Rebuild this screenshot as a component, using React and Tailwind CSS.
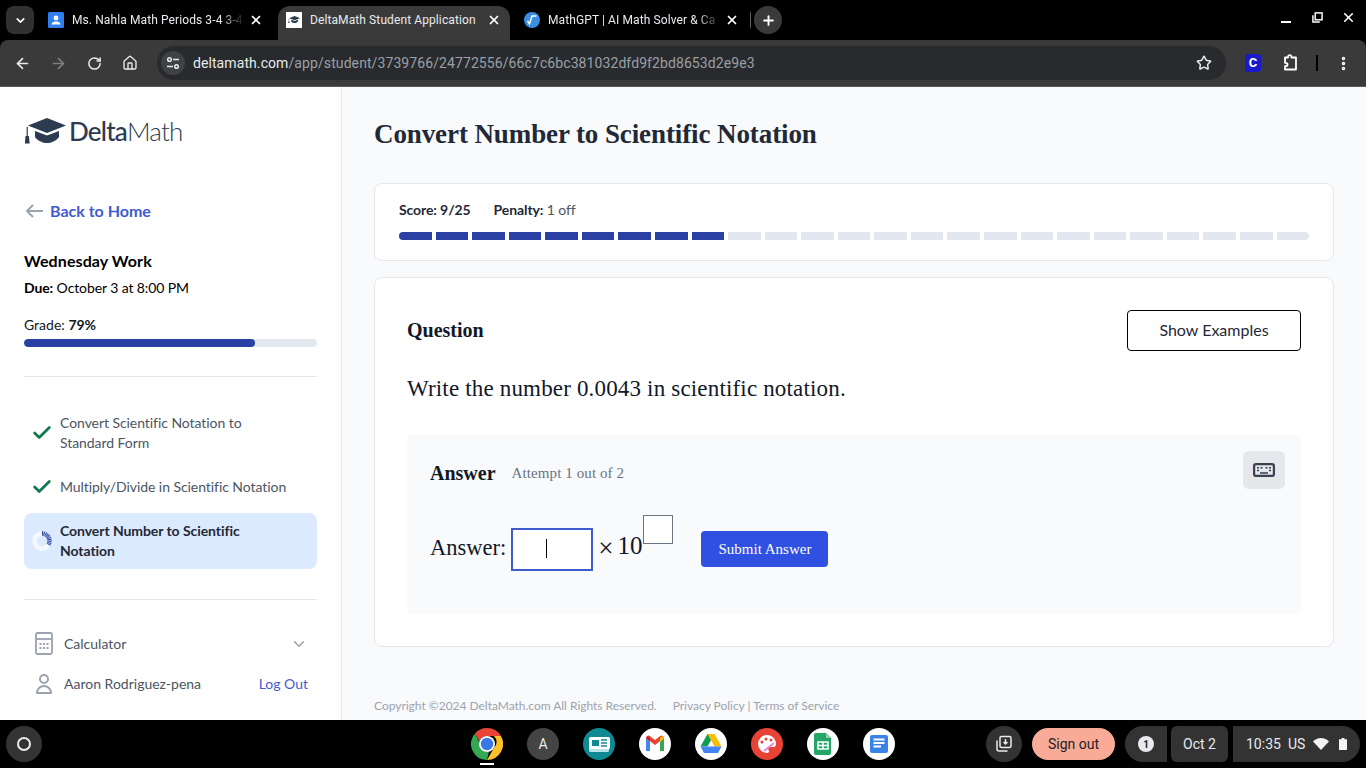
import { ArrowLeft, ArrowRight, Check, ChevronDown, Home, MoreVertical, Plus, RotateCw, Star, X } from "lucide-react";
import { HiOutlineUser } from "react-icons/hi";

const lato = "font-['Lato','Liberation_Sans',sans-serif]";
const serif = "font-['Liberation_Serif','Times_New_Roman',serif]";
const roboto = "font-['Roboto','Liberation_Sans',sans-serif]";

const CapIcon = ({ className, color = "#2d3b50" }) => (
  <svg viewBox="0 0 42 26" className={className} fill={color}>
    <path d="M23 0 42 7.500 23 15 4 7.500Z" />
    <path d="M11 13 23 17.500 35 13v6c-3 4-8 6-12 6s-9-2-12-6Z" />
    <path d="M2.600 9h1.200v9H2.600Z" />
    <path d="M1.500 18h3.400l.8 7.500H.9Z" />
  </svg>
);

const ChromeTab = ({ icon, title, active, faded }) => (
  <div className={`flex h-[34px] shrink-0 items-center pb-[7px] pl-2 ${active ? "mr-[6px] w-[232px] rounded-t-xl bg-[#3a3a3a] pr-[9px]" : "w-[238px] pr-[15px]"}`}>
    <span className="flex h-4 w-4 shrink-0 items-center justify-center">{icon}</span>
    <span className={`ml-2 min-w-0 flex-1 overflow-hidden whitespace-nowrap text-xs tracking-[0.1px] text-[#e8eaed] ${roboto} ${faded ? "[mask-image:linear-gradient(to_right,black_86%,transparent_100%)]" : ""}`}>
      {title}
    </span>
    <X size={14} strokeWidth={3} className="ml-1 shrink-0 text-white" />
  </div>
);

const TopBar = () => (
  <div className="shrink-0 bg-black">
    <div className="flex h-10 items-end">
      <div className="mb-[6px] ml-[6px] flex h-7 w-7 items-center justify-center rounded-lg bg-[#303030]">
        <ChevronDown size={13} strokeWidth={3} className="text-white" />
      </div>
      <div className="ml-[6px] flex">
        <ChromeTab
          title="Ms. Nahla Math Periods 3-4 3-4"
          faded
          icon={
            <svg viewBox="0 0 16 16" className="h-4 w-4">
              <rect width="16" height="16" rx="1.500" fill="#2f7ff0" />
              <circle cx="8" cy="6" r="2.400" fill="#fff" />
              <path d="M3.500 12.500c.5-2.500 2.500-3 4.500-3s4 .5 4.500 3Z" fill="#fff" />
            </svg>
          }
        />
        <ChromeTab
          active
          title="DeltaMath Student Application"
          icon={
            <span className="flex h-4 w-4 items-center justify-center bg-white">
              <CapIcon className="w-3" />
            </span>
          }
        />
        <ChromeTab
          title="MathGPT | AI Math Solver & Ca"
          faded
          icon={
            <svg viewBox="0 0 16 16" className="h-4 w-4">
              <circle cx="8" cy="8" r="8" fill="#3b8fe0" />
              <path d="M3.500 9 5.500 12 8 4h4.500" fill="none" stroke="#fff" strokeWidth="1.400" />
            </svg>
          }
        />
      </div>
      <div className="mb-[12px] ml-[-4px] h-4 w-px bg-[#5f6368]" />
      <div className="mb-[6px] ml-[3px] flex h-7 w-7 items-center justify-center rounded-full bg-[#3a3a3a]">
        <Plus size={15} strokeWidth={3} className="text-white" />
      </div>
      <div className="mb-[15px] ml-auto flex items-center text-white">
        <div className="mt-[8px] h-[2px] w-[10px] bg-white" />
        <svg viewBox="0 0 12 12" className="ml-[21px] h-[11px] w-[11px]" fill="none" stroke="#fff" strokeWidth="1.600">
          <rect x="3.500" y="1" width="7.500" height="7.500" />
          <path d="M1 3.500V11h7.500" />
        </svg>
        <X size={15} strokeWidth={2.600} className="ml-[18px] mr-[10px]" />
      </div>
    </div>
    <div className="flex h-[47px] items-center rounded-t-lg border-b border-[#5a5a5a] bg-[#3a3a3a] pr-[14px]">
      <ArrowLeft size={17} strokeWidth={2.400} className="ml-[14px] text-[#e8eaed]" />
      <ArrowRight size={17} strokeWidth={2.400} className="ml-[19px] text-[#7c7f83]" />
      <RotateCw size={15} strokeWidth={2.400} className="ml-[20px] text-[#e8eaed]" />
      <Home size={16} strokeWidth={2} className="ml-[20px] text-[#e8eaed]" />
      <div className="ml-[19px] flex h-[34px] w-[1070px] items-center rounded-full bg-[#282a2d] pl-[4px] pr-[14px]">
        <span className="flex h-6 w-6 items-center justify-center rounded-full bg-[#3f4144]">
          <svg viewBox="0 0 14 14" className="h-[14px] w-[14px]" fill="none" stroke="#e8eaed" strokeWidth="1.500">
            <circle cx="3.500" cy="3.500" r="1.800" />
            <path d="M7 3.500h6M1 10.500h6" />
            <circle cx="10.500" cy="10.500" r="1.800" />
          </svg>
        </span>
        <span className={`ml-2 text-sm tracking-[0.09px] text-[#e8eaed] ${roboto}`}>
          deltamath.com<span className="text-[#9aa0a6]">/app/student/3739766/24772556/66c7c6bc381032dfd9f2bd8653d2e9e3</span>
        </span>
        <Star size={16} strokeWidth={2.200} className="ml-auto text-[#e8eaed]" />
      </div>
      <span className={`ml-[19px] flex h-[18px] w-4 items-center justify-center rounded-[3px] bg-[#1a1ac8] text-[13px] font-bold text-white ${roboto}`}>C</span>
      <svg viewBox="0 0 18 18" className="ml-[20px] h-[18px] w-[18px]" fill="none" stroke="#fff" strokeWidth="1.800" strokeLinejoin="round">
        <path d="M4 3.500h3V2.800a1.700 1.700 0 0 1 3.400 0v.7H15v12H4v-3.300h.8a1.700 1.700 0 0 0 0-3.400H4Z" />
      </svg>
      <div className="ml-[17px] h-4 w-[2px] bg-black" />
      <MoreVertical size={17} strokeWidth={3} className="ml-[17px] text-white" />
    </div>
  </div>
);

const Spinner = () => (
  <svg viewBox="0 0 20 20" className="h-5 w-5 shrink-0">
    <circle cx="10" cy="10" r="7.500" fill="none" stroke="#fff" strokeWidth="4.500" strokeDasharray="1.100 0.500" />
    <path d="M10 2.500A7.500 7.500 0 0 1 16.500 13.700" fill="none" stroke="#2b40a3" strokeWidth="4.500" strokeDasharray="1.100 0.500" />
  </svg>
);

const SkillRow = ({ lines, done, active }) => (
  <div className={`flex items-center rounded-lg py-2 pl-2 pr-4 ${active ? "bg-[#dbeafe]" : ""}`}>
    <span className="flex h-5 w-5 shrink-0 items-center justify-center">
      {done ? <Check size={22} strokeWidth={3} className="shrink-0 text-[#0f7a4d]" /> : <Spinner />}
    </span>
    <span className={`ml-2 text-sm leading-5 tracking-[-0.06px] ${active ? "font-bold text-[#1f2937]" : "text-[#4b5563]"}`}>
      {lines.map((line) => (
        <span key={line} className="block">
          {line}
        </span>
      ))}
    </span>
  </div>
);

const Sidebar = () => (
  <aside className={`flex w-[342px] shrink-0 flex-col border-r border-[#e5e7eb] bg-white px-6 pt-[30px] ${lato}`}>
    <div className="flex h-7 items-center">
      <CapIcon className="w-[42px]" />
      <span className="ml-[3px] text-[26px] leading-7 tracking-[-0.8px] text-[#2d3b50]">
        <span className="font-medium">Delta</span>
        <span className="font-light">Math</span>
      </span>
    </div>
    <div className="mt-[54px] flex h-6 items-center">
      <svg viewBox="0 0 18 14" className="ml-px h-[14px] w-[18px]" fill="none" stroke="#9ca3af" strokeWidth="2">
        <path d="M18 7H2M8 1 2 7l6 6" />
      </svg>
      <span className="ml-[7px] text-base font-bold text-[#3f5bd0]">Back to Home</span>
    </div>
    <div className="mt-[26px] text-base font-bold leading-6 tracking-[0.1px] text-black">Wednesday Work</div>
    <div className="mt-[3px] text-sm leading-6 tracking-[-0.1px] text-black">
      <span className="font-bold">Due:</span> October 3 at 8:00 PM
    </div>
    <div className="mt-[15px] text-sm leading-5 text-[#111827]">
      Grade: <span className="font-bold">79%</span>
    </div>
    <div className="mt-1 h-2 overflow-hidden rounded-full bg-[#e3e7ef]">
      <div className="h-2 rounded-full bg-[#2b40a3]" style={{ width: "79%" }} />
    </div>
    <div className="mt-[29px] h-px bg-[#e5e7eb]" />
    <div className="mt-7 flex flex-col gap-2">
      <SkillRow done lines={["Convert Scientific Notation to", "Standard Form"]} />
      <SkillRow done lines={["Multiply/Divide in Scientific Notation"]} />
      <SkillRow active lines={["Convert Number to Scientific", "Notation"]} />
    </div>
    <div className="mt-[30px] h-px bg-[#e5e7eb]" />
    <div className="mt-[24px] flex h-10 items-center pl-[11px] text-sm text-[#4b5563]">
      <svg viewBox="0 0 18 24" className="h-6 w-[18px]" fill="none" stroke="#9ca3af" strokeWidth="1.800">
        <rect x="1" y="1" width="16" height="21" rx="1.500" />
        <path d="M1 7h16" />
        <path d="M4.500 11h2v2h-2ZM8 11h2v2H8ZM11.500 11h2v2h-2ZM4.500 15h2v2h-2ZM8 15h2v2H8ZM11.500 15h2v2h-2Z" fill="#9ca3af" stroke="none" />
      </svg>
      <span className="ml-[11px]">Calculator</span>
      <ChevronDown size={18} strokeWidth={2} className="ml-auto mr-[9px] text-[#9ca3af]" />
    </div>
    <div className="flex h-10 items-center pl-2 text-sm text-[#4b5563]">
      <HiOutlineUser size={24} className="text-[#9ca3af]" />
      <span className="ml-2">Aaron Rodriguez-pena</span>
      <span className="ml-auto mr-[9px] text-[#3f5bd0]">Log Out</span>
    </div>
  </aside>
);

const ScoreCard = () => (
  <div className={`mt-[31px] h-[78px] rounded-lg border border-[#e5e7eb] bg-white px-6 pt-4 ${lato}`}>
    <div className="flex text-sm leading-5 tracking-[-0.1px]">
      <span className="font-bold text-[#1f2937]">Score: 9/25</span>
      <span className="ml-[23px] text-[#4b5563]">
        <span className="font-bold text-[#1f2937]">Penalty:</span> 1 off
      </span>
    </div>
    <div className="mt-3 flex gap-1">
      {Array.from({ length: 25 }, (_, i) => (
        <div
          key={i}
          className={`h-2 flex-1 ${i < 9 ? "bg-[#2b40a3]" : "bg-[#e3e7ef]"} ${i === 0 ? "rounded-l-full" : ""} ${i === 24 ? "rounded-r-full" : ""}`}
        />
      ))}
    </div>
  </div>
);

const QuestionCard = () => (
  <div className="mt-4 h-[370px] rounded-lg border border-[#e5e7eb] bg-white px-8 pt-8">
    <div className="flex items-center justify-between">
      <h2 className={`pb-[2px] text-[20px] font-bold text-[#111827] ${serif}`}>Question</h2>
      <button type="button" className={`h-[41px] w-[174px] rounded border border-black pb-[2px] text-base text-[#1f2937] ${lato}`}>
        Show Examples
      </button>
    </div>
    <p className={`mt-[22px] text-[23px] leading-[32px] tracking-[0.17px] text-[#111827] ${serif}`}>Write the number 0.0043 in scientific notation.</p>
    <div className="mt-[30px] h-[179px] rounded bg-[#f9fafb] pl-[23px] pr-4 pt-4">
      <div className="flex items-start">
        <div className={`mt-[10px] flex items-center ${serif}`}>
          <span className="text-[20px] font-bold leading-6 text-[#111827]">Answer</span>
          <span className="ml-4 text-[15px] leading-6 tracking-[0.1px] text-[#6b7280]">Attempt 1 out of 2</span>
        </div>
        <button type="button" className="ml-auto flex h-[38px] w-[42px] items-center justify-center rounded-md bg-[#e5e7eb]">
          <svg viewBox="0 0 22 14" className="h-[14px] w-[22px]" fill="none" stroke="#374151" strokeWidth="2.200">
            <rect x="1.100" y="1.100" width="19.800" height="11.800" rx="2" />
            <path d="M4 4.800h2M7.500 4.800h2M12.500 4.800h2M16 4.800h2M4 7.500h2M16 7.500h2M7 10h8" strokeWidth="1.600" />
          </svg>
        </button>
      </div>
      <div className={`mt-[26px] flex h-[56px] items-end ${serif}`}>
        <span className="mb-[9px] text-[22.5px] leading-7 text-[#111827]">Answer:</span>
        <div className="relative ml-[5px] h-[43px] w-[82px] border-2 border-[#3f5bd0] bg-white">
          <span className="absolute left-[33px] top-[9px] h-[19px] w-px bg-black" />
        </div>
        <span className="mb-[9px] ml-[5px] text-[27px] leading-7 text-[#111827]">×</span>
        <span className="mb-[11px] ml-[4px] text-[25px] leading-7 text-[#111827]">10</span>
        <div className="mb-[27px] ml-px h-[29px] w-[30px] border border-[#6b7280] bg-white" />
        <button type="button" className="mb-[4px] ml-[28px] h-9 w-[127px] rounded bg-[#2f50e0] text-[15px] text-white">
          Submit Answer
        </button>
      </div>
    </div>
  </div>
);

const Taskbar = () => (
  <div className={`relative flex h-12 shrink-0 items-center bg-black ${roboto}`}>
    <div className="ml-[6px] flex h-9 w-9 items-center justify-center rounded-full bg-[#333]">
      <div className="h-[14px] w-[14px] rounded-full border-2 border-[#e8eaed]" />
    </div>
    <div className="ml-[429px] flex items-center gap-6">
      <div className="relative h-8 w-8">
        <svg viewBox="0 0 32 32" className="h-8 w-8">
          <path d="M16 0a16 16 0 0 1 13.900 8H16a8 8 0 0 0-7.600 5.500L4 5.500A16 16 0 0 1 16 0Z" fill="#ea4335" />
          <path d="M29.900 8A16 16 0 0 1 16 32l6.900-12A8 8 0 0 0 22.900 8Z" fill="#fbc02d" />
          <path d="M16 32A16 16 0 0 1 4 5.500L9 16a7 7 0 0 0 9 7.500Z" fill="#34a853" />
          <circle cx="16" cy="16" r="8" fill="#fff" />
          <circle cx="16" cy="16" r="6.200" fill="#3b78e7" />
        </svg>
        <div className="absolute -bottom-[5px] left-[9px] h-[2px] w-[14px] bg-white" />
      </div>
      <div className="flex h-8 w-8 items-center justify-center rounded-full bg-[#444] text-sm text-[#e8eaed]">A</div>
      <svg viewBox="0 0 32 32" className="h-8 w-8">
        <circle cx="16" cy="16" r="16" fill="#0f8a94" />
        <rect x="6" y="12" width="20" height="12" rx="1.500" fill="#b8e3ea" />
        <rect x="6" y="9" width="21" height="12" rx="1.500" fill="#fff" />
        <rect x="9" y="12" width="7" height="6" fill="#0f8a94" />
        <path d="M18 12h6M18 15h6M18 18h6" stroke="#0f8a94" strokeWidth="1.400" />
      </svg>
      <svg viewBox="0 0 32 32" className="h-8 w-8">
        <circle cx="16" cy="16" r="16" fill="#fff" />
        <path d="M7 10v13h4v-9Z" fill="#4285f4" />
        <path d="M21 14v9h4V10Z" fill="#34a853" />
        <path d="M7 10a2.400 2.400 0 0 1 3.800-1.900L16 12l5.200-3.900A2.400 2.400 0 0 1 25 10l-9 7Z" fill="#ea4335" />
        <path d="M7 10l4 4v-4l-2-2Z" fill="#c5221f" />
        <path d="M25 10l-4 4v-4l2-2Z" fill="#fbbc04" />
      </svg>
      <svg viewBox="0 0 32 32" className="h-8 w-8">
        <circle cx="16" cy="16" r="16" fill="#fff" />
        <path d="M12.500 6h7l-7 12.500H5.500Z" fill="#0f9d58" />
        <path d="M19.500 6l7 12.500h-7L12.500 6Z" fill="#fbbc04" />
        <path d="M9 18.500h17.500L23 25H9l-3.500-6.500Z" fill="#4285f4" />
      </svg>
      <svg viewBox="0 0 32 32" className="h-8 w-8">
        <circle cx="16" cy="16" r="16" fill="#ea4335" />
        <path d="M16 7a9 9 0 1 0 0 18c2 0 2.500-1.500 1.500-3-1-2 0-3 2-3h3c1.500 0 2.500-1 2.500-3 0-5-4-9-9-9Z" fill="#fff" />
        <circle cx="11" cy="14" r="1.500" fill="#ea4335" />
        <circle cx="15" cy="11" r="1.500" fill="#ea4335" />
        <circle cx="20" cy="12" r="1.500" fill="#ea4335" />
        <path d="M13 23l10-8" stroke="#e38ad5" strokeWidth="2" />
      </svg>
      <svg viewBox="0 0 32 32" className="h-8 w-8">
        <circle cx="16" cy="16" r="16" fill="#fff" />
        <path d="M9 5h10l5 5v15a2 2 0 0 1-2 2H9a2 2 0 0 1-2-2V7a2 2 0 0 1 2-2Z" fill="#23a566" />
        <path d="M19 5l5 5h-5Z" fill="#8ed1b1" />
        <path d="M11 14h10v7H11ZM16 14v7M11 17.500h10" fill="none" stroke="#fff" strokeWidth="1.500" />
      </svg>
      <svg viewBox="0 0 32 32" className="h-8 w-8">
        <circle cx="16" cy="16" r="16" fill="#fff" />
        <rect x="7" y="7" width="18" height="18" rx="2" fill="#3b82e8" />
        <path d="M10.500 11.500h11M10.500 15h11M10.500 18.500h7.500" stroke="#fff" strokeWidth="1.800" />
      </svg>
    </div>
    <div className="ml-[91px] flex h-9 w-9 items-center justify-center rounded-full bg-[#333]">
      <svg viewBox="0 0 18 18" className="h-[18px] w-[18px]" fill="none" stroke="#e8eaed" strokeWidth="1.500">
        <rect x="5" y="1.500" width="11" height="11" rx="1.500" />
        <path d="M2 5.500V14a2 2 0 0 0 2 2h8.500" />
        <path d="M10.500 4v5M8.500 7l2 2 2-2" />
      </svg>
    </div>
    <div className="ml-[10px] flex h-8 w-[83px] items-center justify-center rounded-full bg-[#f9ab97] text-sm text-[#202124]">Sign out</div>
    <div className="ml-[10px] flex h-9 w-[42px] items-center justify-center rounded-l-full rounded-r-md bg-[#333]">
      <span className="flex h-4 w-4 items-center justify-center rounded-full bg-[#e8eaed] text-[10px] font-bold text-[#202124]">1</span>
    </div>
    <div className="ml-1 flex h-9 w-[57px] items-center justify-center rounded-md bg-[#333] text-sm text-[#e8eaed]">Oct 2</div>
    <div className="ml-[5px] flex h-9 w-[127px] items-center rounded-l-md rounded-r-full bg-[#333] pl-[13px] text-sm text-[#e8eaed]">
      <span>10:35</span>
      <span className="ml-[7px]">US</span>
      <svg viewBox="0 0 16 12" className="ml-[8px] h-3 w-4" fill="#f1f3f4">
        <path d="M8 12 0 3.500C2 1.500 5 0 8 0s6 1.500 8 3.500Z" />
      </svg>
      <svg viewBox="0 0 8 12" className="ml-[10px] h-3 w-2" fill="#f1f3f4">
        <path d="M2.500 0h3v1.200H8V12H0V1.200h2.500Z" />
      </svg>
    </div>
  </div>
);

export default function App() {
  return (
    <div className="flex h-[768px] w-[1366px] flex-col overflow-hidden bg-white">
      <TopBar />
      <div className="flex min-h-0 flex-1">
        <Sidebar />
        <main className="flex-1 bg-[#f9fafb] px-8 pt-[29px]">
          <h1 className={`h-9 text-[27px] font-bold leading-9 tracking-[-0.1px] text-[#1f2937] ${serif}`}>Convert Number to Scientific Notation</h1>
          <ScoreCard />
          <QuestionCard />
          <div className={`mt-[51px] flex text-xs leading-4 tracking-[-0.02px] text-[#9ca3af] ${lato}`}>
            <span>Copyright ©2024 DeltaMath.com All Rights Reserved.</span>
            <span className="ml-4">Privacy Policy | Terms of Service</span>
          </div>
        </main>
      </div>
      <Taskbar />
    </div>
  );
}
